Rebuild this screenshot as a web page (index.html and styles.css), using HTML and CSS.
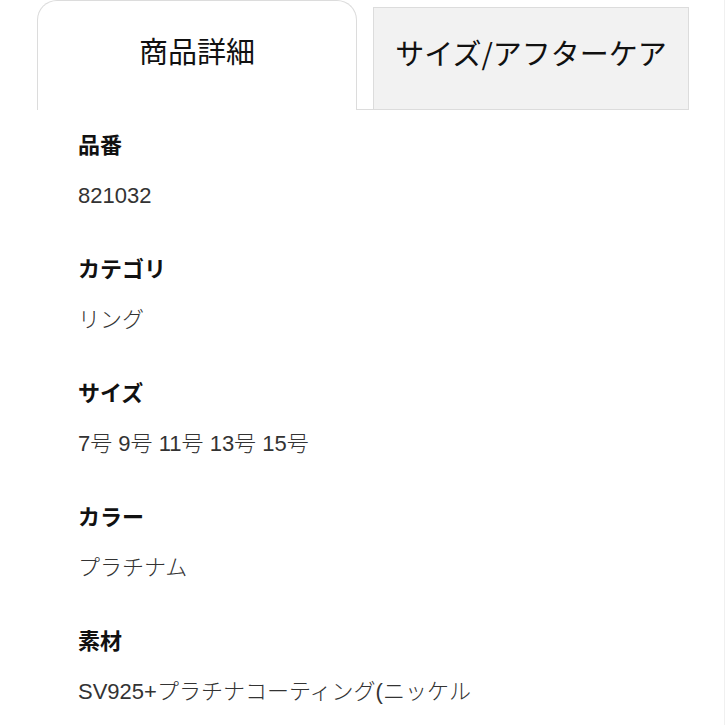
FILE: index.html
```html
<!DOCTYPE html>
<html lang="ja">
<head>
<meta charset="utf-8">
<title>商品詳細</title>
<link rel="stylesheet" href="styles.css">
</head>
<body>
<div class="page">
  <div class="tabs">
    <div class="tab tab-active">商品詳細</div>
    <div class="tab-gap"></div>
    <div class="tab tab-inactive">サイズ/アフターケア</div>
  </div>
  <div class="details">
    <div class="item">
      <div class="label">品番</div>
      <div class="value">821032</div>
    </div>
    <div class="item">
      <div class="label">カテゴリ</div>
      <div class="value">リング</div>
    </div>
    <div class="item">
      <div class="label">サイズ</div>
      <div class="value">7号 9号 11号 13号 15号</div>
    </div>
    <div class="item">
      <div class="label">カラー</div>
      <div class="value">プラチナム</div>
    </div>
    <div class="item">
      <div class="label">素材</div>
      <div class="value">SV925+プラチナコーティング(ニッケル</div>
    </div>
  </div>
</div>
</body>
</html>
```
FILE: styles.css
```css
html, body {
  margin: 0;
  padding: 0;
  background: #fff;
}
body {
  font-family: "Liberation Sans", "Noto Sans CJK JP", sans-serif;
  color: #111;
}
.page {
  width: 725px;
  height: 725px;
  overflow: hidden;
  box-sizing: border-box;
  border-right: 1px solid #f0f0f0;
}
.tabs {
  display: flex;
  align-items: flex-end;
  padding-left: 37px;
  height: 110px;
}
.tab {
  box-sizing: border-box;
  display: flex;
  align-items: center;
  justify-content: center;
  font-family: "Noto Sans CJK JP", sans-serif;
  font-size: 29px;
  color: #111;
}
.tab-active {
  width: 320px;
  height: 110px;
  border: 1px solid #dcdcdc;
  border-bottom: none;
  border-radius: 20px 20px 0 0;
  background: #fff;
  padding-bottom: 12px;
}
.tab-gap {
  width: 16px;
  height: 1px;
  background: #dcdcdc;
}
.tab-inactive {
  width: 316px;
  height: 103px;
  border: 1px solid #dcdcdc;
  background: #f2f2f2;
  padding-bottom: 14px;
}
.details {
  padding: 21px 0 0 78px;
}
.item {
  margin-bottom: 44px;
}
.label {
  font-size: 22px;
  line-height: 30px;
  font-weight: bold;
  color: #111;
  margin-bottom: 20px;
}
.value {
  font-size: 22px;
  line-height: 30px;
  font-weight: 300;
  color: #333;
  white-space: nowrap;
}
```
